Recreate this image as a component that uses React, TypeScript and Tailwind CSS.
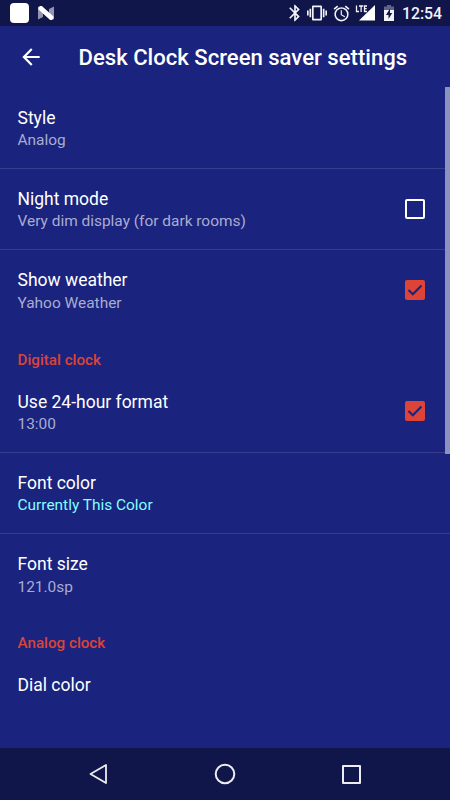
import type { ReactNode } from "react";
import { MdArrowBack, MdBluetooth, MdVibration, MdAlarm } from "react-icons/md";

function StatusBar() {
  return (
    <header className="flex h-[26px] shrink-0 items-center bg-[#10154a] text-[#f3f3f8]">
      <div className="ml-[10px] h-5 w-[19px] rounded-[4px] bg-white" />
      <svg className="ml-[9px] h-[14px] w-4" viewBox="0 0 16 14">
        <path d="M0 .5 5 3v8L0 13.500zM16 .5 11 3v8l5 2.500z" fill="#9294b0" />
        <path d="M3 2.500 13 11.500" stroke="#fff" strokeWidth="5" strokeLinecap="round" />
      </svg>
      <div className="ml-auto flex items-center pr-[8px]">
        <MdBluetooth className="size-[20px]" />
        <MdVibration className="ml-[2px] size-[20px]" />
        <MdAlarm className="ml-[5px] size-[19px]" />
        <svg className="ml-[4px] h-4 w-5" viewBox="0 0 20 16">
          <path d="M20 0v15.500H4z" fill="#fff" />
          <path d="M0 0h12v8H0z" fill="#10154a" />
          <path d="M1.500.500v6h2.500M4 1h4.200M6.100 1v6M12 1H9.500v5.500H12M9.500 3.700h2.200" fill="none" stroke="#f3f3f8" strokeWidth="1.300" />
        </svg>
        <svg className="ml-[9px] h-4 w-[10px]" viewBox="0 0 10 16">
          <path d="M3 0h4v1.500h3V5H0V1.500h3z" fill="#60638b" />
          <path d="M0 5h10v11H0z" fill="#f3f3f8" />
          <path d="M6 3.500 2 10h2.500v4L8.200 8H6z" fill="#10154a" />
        </svg>
        <span className="ml-[8px] w-[40px] pt-[2px] text-[15.8px] leading-5 font-medium whitespace-nowrap">12:54</span>
      </div>
    </header>
  );
}

function Box({ checked }: { checked: boolean }) {
  return checked ? (
    <div className="flex size-5 items-center justify-center rounded-[2px] bg-[#db4437]">
      <svg className="size-5" viewBox="0 0 20 20">
        <path d="m3.500 10 4.300 4.300 8.700-8.800" fill="none" stroke="#1a237e" strokeWidth="2.100" />
      </svg>
    </div>
  ) : (
    <div className="mt-px size-5 rounded-[2px] border-2 border-white" />
  );
}

interface RowProps {
  title: string;
  summary?: string;
  accent?: boolean;
  divider?: boolean;
  checked?: boolean;
}

function Row({ title, summary, accent, divider, checked }: RowProps) {
  return (
    <div className={`flex h-[81.2px] shrink-0 items-center border-b pr-[25px] pl-[17.5px] ${divider ? "border-[#353d8d]" : "border-transparent"}`}>
      <div className="flex h-full flex-1 flex-col pt-[18.2px]">
        <div className="text-[17.5px] leading-[24px] whitespace-nowrap text-white">{title}</div>
        {summary && (
          <div className={`pt-[0.6px] text-[15.45px] leading-[21px] whitespace-nowrap ${accent ? "text-[#84ffff]" : "text-[#a9acd0]"}`}>{summary}</div>
        )}
      </div>
      {checked !== undefined && <Box checked={checked} />}
    </div>
  );
}

function Category({ children }: { children: ReactNode }) {
  return (
    <h2 className="flex h-[40.3px] shrink-0 items-end pb-[0.8px] pl-[17.5px] text-[15.2px] leading-[21px] font-medium text-[#db4437]">
      <span>{children}</span>
    </h2>
  );
}

export default function App() {
  return (
    <div className="flex h-[800px] w-[450px] flex-col overflow-hidden bg-[#1a237e] font-['Roboto',sans-serif]">
      <StatusBar />
      <div className="flex h-[61px] shrink-0 items-center pl-[18px]">
        <MdArrowBack className="size-[26px] text-white" />
        <h1 className="ml-[34.5px] pt-px text-[22.1px] leading-7 font-medium whitespace-nowrap text-white">Desk Clock Screen saver settings</h1>
      </div>
      <main className="relative flex min-h-0 flex-1 flex-col overflow-hidden pt-[0.5px]">
        <Row title="Style" summary="Analog" divider />
        <Row title="Night mode" summary="Very dim display (for dark rooms)" divider checked={false} />
        <Row title="Show weather" summary="Yahoo Weather" checked />
        <Category>Digital clock</Category>
        <Row title="Use 24-hour format" summary="13:00" divider checked />
        <Row title="Font color" summary="Currently This Color" accent divider />
        <Row title="Font size" summary="121.0sp" />
        <Category>Analog clock</Category>
        <Row title="Dial color" />
        <div className="absolute top-0 right-0 h-[367px] w-[5px] bg-[#8d91bf]" />
      </main>
      <nav className="flex h-[52px] shrink-0 items-center bg-[#10154a]">
        <svg className="ml-[89px] size-5" viewBox="0 0 20 20" fill="none" stroke="#ececf2" strokeWidth="1.800" strokeLinejoin="round">
          <path d="M17 1v18L1.500 10z" />
        </svg>
        <svg className="ml-[105px] size-[22px]" viewBox="0 0 22 22" fill="none" stroke="#ececf2" strokeWidth="2">
          <circle cx="11" cy="11" r="9.300" />
        </svg>
        <div className="ml-[106px] size-[19px] rounded-[1px] border-2 border-[#ececf2]" />
      </nav>
    </div>
  );
}
